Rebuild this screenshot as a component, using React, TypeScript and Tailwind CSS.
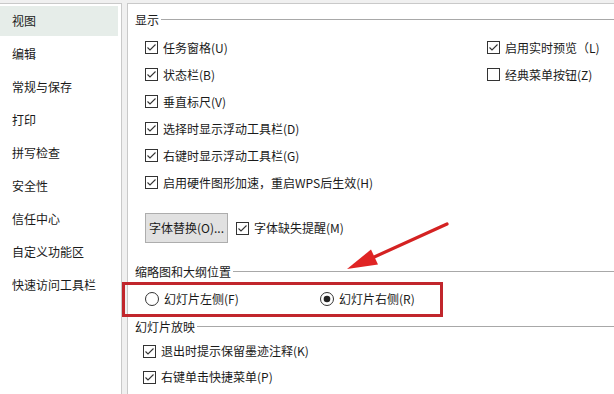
import React from "react";

const font = { fontFamily: '"Noto Sans CJK SC", "Noto Sans", sans-serif' };

function Check({ checked }: { checked: boolean }) {
  return (
    <svg width="13" height="13" viewBox="0 0 13 13" className="shrink-0">
      <rect x="0.5" y="0.5" width="12" height="12" fill="#fff" stroke="#333" />
      {checked && (
        <polyline points="2.5,6.5 5,9 10.5,3.5" fill="none" stroke="#333" strokeWidth="1.1" />
      )}
    </svg>
  );
}

function Radio({ checked }: { checked: boolean }) {
  return (
    <svg width="14" height="14" viewBox="0 0 14 14" className="shrink-0">
      <circle cx="7" cy="7" r="6.5" fill="#fff" stroke="#333" />
      {checked && <circle cx="7" cy="7" r="3.3" fill="#222" />}
    </svg>
  );
}

function CheckRow({ label, checked = true, h = "h-[27px]" }: { label: string; checked?: boolean; h?: string }) {
  return (
    <div className={`flex items-center gap-[5px] ${h}`}>
      <Check checked={checked} />
      <span>{label}</span>
    </div>
  );
}

function GroupHeader({ label }: { label: string }) {
  return (
    <div className="flex items-center h-[20px] pl-[7px]">
      <span>{label}</span>
      <div className="flex-1 h-px bg-[#a8a8a8] ml-[2px] mt-[-1px]" />
    </div>
  );
}

const navItems = [
  "视图",
  "编辑",
  "常规与保存",
  "打印",
  "拼写检查",
  "安全性",
  "信任中心",
  "自定义功能区",
  "快速访问工具栏",
];

export default function App() {
  return (
    <div
      className="relative w-[614px] h-[394px] overflow-hidden bg-[#f0f0f0] text-[12px] text-[#1a1a1a] flex pt-[3px]"
      style={font}
    >
      {/* Left navigation */}
      <div className="w-[122px] h-full bg-white border-t border-r border-[#c9c9c9] shrink-0">
        {navItems.map((t, i) => (
          <div key={t} className="h-[33px] py-[1.5px] pr-[3px]">
            <div
              className={`h-full flex items-center pl-[12px] ${i === 0 ? "bg-[#e6ede9]" : ""}`}
            >
              {t}
            </div>
          </div>
        ))}
      </div>

      <div className="w-[5px] shrink-0" />

      {/* Right content */}
      <div className="flex-1 h-full bg-white border-t border-l border-[#c9c9c9] pt-[6px]">
        <GroupHeader label="显示" />
        <div className="flex pl-[17px] mt-[4px]">
          <div className="w-[342px]">
            <CheckRow label="任务窗格(U)" />
            <CheckRow label="状态栏(B)" />
            <CheckRow label="垂直标尺(V)" />
            <CheckRow label="选择时显示浮动工具栏(D)" />
            <CheckRow label="右键时显示浮动工具栏(G)" />
            <CheckRow label="启用硬件图形加速，重启WPS后生效(H)" />
          </div>
          <div>
            <CheckRow label="启用实时预览（L)" />
            <CheckRow label="经典菜单按钮(Z)" checked={false} />
          </div>
        </div>
        <div className="flex items-center pl-[17px] mt-[17px] h-[30px]">
          <div className="w-[83px] h-[30px] flex items-center justify-center bg-[#e1e1e1] border border-[#adadad]">
            字体替换(O)...
          </div>
          <div className="ml-[8px] flex items-center gap-[5px]">
            <Check checked />
            <span>字体缺失提醒(M)</span>
          </div>
        </div>

        <div className="mt-[19px]">
          <GroupHeader label="缩略图和大纲位置" />
        </div>
        <div className="flex items-center h-[33px] pl-[17px]">
          <div className="w-[175px] flex items-center gap-[5px]">
            <Radio checked={false} />
            <span>幻灯片左侧(F)</span>
          </div>
          <div className="flex items-center gap-[5px]">
            <Radio checked />
            <span>幻灯片右侧(R)</span>
          </div>
        </div>

        <div className="mt-[2px]">
          <GroupHeader label="幻灯片放映" />
        </div>
        <div className="pl-[15px] mt-[1px]">
          <CheckRow label="退出时提示保留墨迹注释(K)" h="h-[26px]" />
          <CheckRow label="右键单击快捷菜单(P)" h="h-[26px]" />
        </div>
      </div>

      {/* Annotation: red rectangle */}
      <div className="absolute left-[122px] top-[282px] w-[321px] h-[35px] border-[3px] border-[#c1262c] pointer-events-none" />

      {/* Annotation: red arrow */}
      <svg className="absolute left-0 top-0 pointer-events-none" width="614" height="394">
        <line x1="447" y1="224" x2="372" y2="258" stroke="#d42222" strokeWidth="3.2" strokeLinecap="round" />
        <polygon points="347,269 371,249.5 378,264.5" fill="#e02424" />
      </svg>
    </div>
  );
}
